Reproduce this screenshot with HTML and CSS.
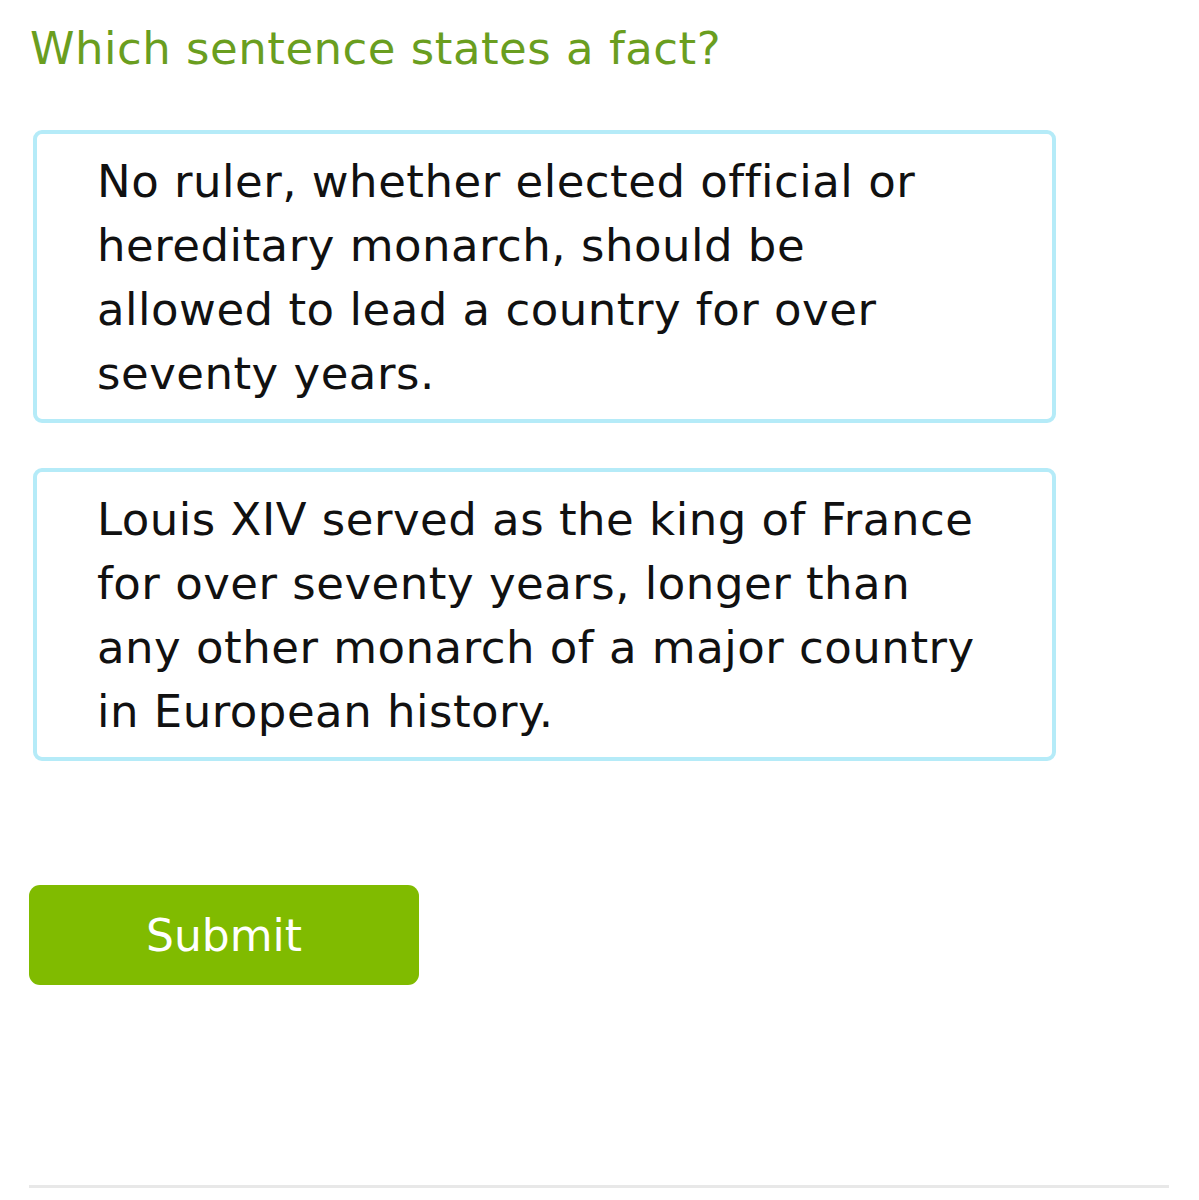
FILE: index.html
```html
<!DOCTYPE html>
<html>
<head>
<meta charset="utf-8">
<link rel="stylesheet" href="styles.css">
</head>
<body>
<main class="page">
  <h1 class="question">Which sentence states a fact?</h1>
  <div class="choices">
    <div class="choice">No ruler, whether elected official or hereditary monarch, should be allowed to lead a country for over seventy years.</div>
    <div class="choice">Louis XIV served as the king of France for over seventy years, longer than any other monarch of a major country in European history.</div>
  </div>
  <button class="submit">Submit</button>
  <hr class="divider">
</main>
</body>
</html>
```
FILE: styles.css
```css
html, body {
  margin: 0;
  padding: 0;
  background: #ffffff;
}
.page {
  padding: 0 30px 0 29px;
  font-family: "DejaVu Sans", Verdana, sans-serif;
  font-variant-ligatures: none;
  display: flex;
  flex-direction: column;
  align-items: flex-start;
}
.question {
  margin: 22px 0 0 1px;
  font-size: 45px;
  font-weight: normal;
  line-height: 54px;
  letter-spacing: 0.5px;
  color: #6a9e1f;
}
.choices {
  margin-top: 54px;
  margin-left: 4px;
  display: flex;
  flex-direction: column;
  gap: 45px;
}
.choice {
  width: 895px;
  border: 4px solid #b5ebf8;
  border-radius: 9px;
  padding: 16px 60px 13px 60px;
  font-size: 45px;
  line-height: 64px;
  letter-spacing: 0.5px;
  color: #111111;
}
.submit {
  margin-top: 124px;
  width: 390px;
  height: 100px;
  border: none;
  border-radius: 11px;
  background: #80bb00;
  color: #ffffff;
  font-family: "DejaVu Sans", Verdana, sans-serif;
  font-size: 44px;
  padding: 0;
}
.divider {
  align-self: stretch;
  margin: 200px 0 0 0;
  border: none;
  height: 3px;
  background: #e8e8e8;
}
```
